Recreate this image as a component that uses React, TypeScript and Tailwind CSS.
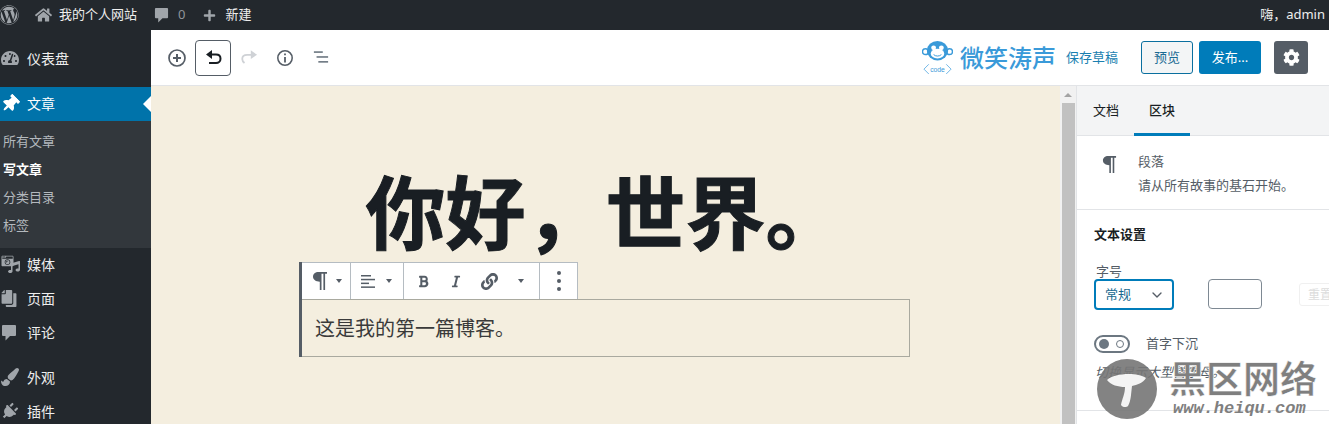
import { FaWordpress, FaHome, FaPlus, FaTachometerAlt, FaThumbtack, FaCopy, FaPaintBrush, FaPlug, FaCog, FaBold, FaItalic, FaLink, FaCameraRetro, FaMusic } from "react-icons/fa";
import { ChevronDown } from "lucide-react";

const font = "font-['Noto_Sans','Noto_Sans_CJK_SC',sans-serif]";

function Caret({ className = "" }: { className?: string }) {
  return <span className={`w-0 h-0 border-x-[3.5px] border-x-transparent border-t-[4px] border-t-[#555d66] ${className}`} />;
}

function Pilcrow({ className = "" }: { className?: string }) {
  return (
    <svg viewBox="0 0 16 20" className={className} fill="#555d66">
      <path d="M6.500 1H15v1.700h-1.900V19h-1.700V2.700H9.500V19H7.800v-8.300C4 10.700 1 8.800 1 5.800 1 3 3.300 1 6.500 1z" />
    </svg>
  );
}

function Bubble({ className = "" }: { className?: string }) {
  return (
    <svg viewBox="0 0 16 17" className={className} fill="currentColor">
      <path d="M2 1h12a1 1 0 0 1 1 1v9a1 1 0 0 1-1 1H9l-4.500 4.500V12H2a1 1 0 0 1-1-1V2a1 1 0 0 1 1-1z" />
    </svg>
  );
}

function MediaIcon() {
  return (
    <span className="relative w-[19px] h-[18px] text-[#a0a5aa]">
      <FaCameraRetro className="absolute left-0 top-0 w-[13px] h-[12px]" />
      <FaMusic className="absolute left-[7px] top-[6px] w-[12px] h-[12px]" />
    </span>
  );
}

function MenuItem({ icon, label }: { icon: React.ReactNode; label: string }) {
  return (
    <div className="flex items-center h-[34px] shrink-0 pl-[1px] pb-[2px] text-[#eeeeee] text-[14px]">
      <span className="w-[26px] flex items-center text-[#a0a5aa]">{icon}</span>
      {label}
    </div>
  );
}

function Sidebar() {
  return (
    <aside className="w-[151px] shrink-0 bg-[#23282d] flex flex-col overflow-hidden">
      <div className="pt-[12px] shrink-0">
        <MenuItem icon={<FaTachometerAlt className="w-[18px] h-[18px]" />} label="仪表盘" />
      </div>
      <div className="h-[11px] shrink-0" />
      <div className="relative h-[34px] shrink-0 bg-[#0073aa] flex items-center pl-[1px] pb-[1px] text-white text-[14px]">
        <span className="w-[26px] flex items-center"><FaThumbtack className="w-[18px] h-[18px] rotate-45" /></span>
        文章
        <span className="absolute right-0 top-[9px] w-0 h-0 border-y-[8px] border-y-transparent border-r-[8px] border-r-white" />
      </div>
      <div className="bg-[#32373c] h-[127px] shrink-0 pt-[6px] text-[13px] text-[#b4b9be] pl-[3px]">
        <div className="h-[28px] leading-[28px]">所有文章</div>
        <div className="h-[28px] leading-[28px] text-white font-bold">写文章</div>
        <div className="h-[28px] leading-[28px]">分类目录</div>
        <div className="h-[28px] leading-[28px]">标签</div>
      </div>
      <MenuItem icon={<MediaIcon />} label="媒体" />
      <MenuItem icon={<FaCopy className="w-[16px] h-[17px] -scale-x-100" />} label="页面" />
      <MenuItem icon={<Bubble className="w-[16px] h-[17px]" />} label="评论" />
      <div className="h-[11px] shrink-0" />
      <MenuItem icon={<FaPaintBrush className="w-[18px] h-[18px]" />} label="外观" />
      <MenuItem icon={<FaPlug className="w-[17px] h-[17px] rotate-45" />} label="插件" />
    </aside>
  );
}

function EditorToolbar() {
  return (
    <div className="h-[56px] shrink-0 bg-white border-b border-[#e2e4e7] flex items-center pl-[17px] pr-[21px]">
      <button className="w-[18px] h-[18px] flex items-center justify-center">
        <svg viewBox="0 0 20 20" className="w-[20px] h-[20px] shrink-0" fill="none" stroke="#555d66" strokeWidth="1.700">
          <circle cx="10" cy="10" r="8" />
          <path d="M10 6v8M6 10h8" strokeWidth="2" />
        </svg>
      </button>
      <button className="ml-[9px] w-[36px] h-[36px] rounded-[4px] border border-[#555d66] flex items-center justify-center">
        <svg viewBox="0 0 20 20" className="w-[20px] h-[20px]" fill="none" stroke="#191e23" strokeWidth="2">
          <path d="M5 6.500h8c2.700 0 4.500 1.800 4.500 4.200S15.700 15 13 15H6" />
          <path d="M9 2 3 6.500 9 11z" fill="#191e23" stroke="none" />
        </svg>
      </button>
      <span className="ml-[9px] w-[18px] flex justify-center">
        <svg viewBox="0 0 20 20" className="w-[20px] h-[20px]" fill="none" stroke="#cfd2d6" strokeWidth="2">
          <path d="M15 6.500H8C4.500 6.500 2.500 8.500 2.500 11c0 2 .8 3.200 2.500 4.500" />
          <path d="M12 1.500 19 6.500 12 11z" fill="#cfd2d6" stroke="none" />
        </svg>
      </span>
      <span className="ml-[18px] w-[18px] flex justify-center">
        <svg viewBox="0 0 20 20" className="w-[20px] h-[20px]" fill="none" stroke="#555d66" strokeWidth="1.700">
          <circle cx="10" cy="10" r="8" />
          <path d="M10 9v6" strokeWidth="2" />
          <path d="M10 5v2" strokeWidth="2" />
        </svg>
      </span>
      <span className="ml-[18px] w-[18px] flex justify-center">
        <svg viewBox="0 0 18 14" className="w-[16px] h-[13px]" fill="#6c7781">
          <rect x="1" y="0" width="10" height="1.800" />
          <rect x="4" y="5.500" width="13" height="1.800" />
          <rect x="6" y="11" width="11" height="1.800" />
        </svg>
      </span>

      <div className="ml-auto flex items-center">
        <svg viewBox="0 0 32 36" className="w-[31px] h-[35px]" fill="none">
          <circle cx="3.500" cy="12" r="3" stroke="#3a9ad9" strokeWidth="1.500" />
          <circle cx="28.500" cy="12" r="3" stroke="#3a9ad9" strokeWidth="1.500" />
          <ellipse cx="16" cy="11" rx="11" ry="10" fill="#3a9ad9" />
          <ellipse cx="16" cy="14" rx="7" ry="5" fill="#ffffff" />
          <circle cx="12" cy="8" r="2.500" fill="#ffffff" />
          <circle cx="20" cy="8" r="2.500" fill="#ffffff" />
          <path d="M12 15c2 2 6 2 8 0" stroke="#3a9ad9" strokeWidth="1" />
          <path d="M7 25 2 30l5 5M25 25l5 5-5 5" stroke="#6db6e6" strokeWidth="1" />
          <text x="16" y="33" fontSize="7" textAnchor="middle" fill="#3a9ad9" fontFamily="Liberation Sans">code</text>
        </svg>
        <span className="ml-[7px] w-[96px] text-[24px] leading-none font-medium text-[#3a9ad9] whitespace-nowrap">微笑涛声</span>
        <span className="ml-[10px] text-[13px] text-[#1a7fb0]">保存草稿</span>
        <button className="ml-[23px] w-[52px] h-[33px] rounded-[3px] border border-[#0a6f9f] bg-[#f3f5f6] text-[13px] text-[#1a6a93]">预览</button>
        <button className="ml-[6px] w-[62px] h-[33px] rounded-[3px] bg-[#007cba] text-[13px] text-white">发布...</button>
        <button className="ml-[13px] w-[34px] h-[33px] rounded-[3px] bg-[#555d66] flex items-center justify-center">
          <FaCog className="w-[17px] h-[17px] text-white" />
        </button>
      </div>
    </div>
  );
}

function BlockToolbar() {
  const cell = "h-full flex items-center border-r border-[#b5bcc2]";
  return (
    <div className="w-[276px] h-[38px] -mb-[1px] bg-white border border-[#b5bcc2] border-l-0 flex items-center shrink-0">
      <div className={`${cell} w-[49px] pl-[10px]`}>
        <Pilcrow className="w-[16px] h-[20px]" />
        <Caret className="ml-[8px]" />
      </div>
      <div className={`${cell} w-[53px] pl-[10px]`}>
        <svg viewBox="0 0 15 13" className="w-[15px] h-[13px]" fill="#555d66">
          <rect x="0" y="0" width="10" height="1.500" />
          <rect x="0" y="3.800" width="14" height="1.500" />
          <rect x="0" y="7.600" width="8" height="1.500" />
          <rect x="0" y="11.400" width="14" height="1.500" />
        </svg>
        <Caret className="ml-[10px]" />
      </div>
      <div className={`${cell} w-[136px] pl-[14px] text-[#555d66]`}>
        <FaBold className="w-[11px] h-[13px]" />
        <FaItalic className="ml-[22px] w-[10px] h-[13px]" />
        <FaLink className="ml-[20px] w-[17px] h-[17px]" />
        <Caret className="ml-[20px]" />
      </div>
      <div className="flex-1 flex flex-col items-center gap-[4px]">
        <span className="w-[4px] h-[4px] rounded-full bg-[#555d66]" />
        <span className="w-[4px] h-[4px] rounded-full bg-[#555d66]" />
        <span className="w-[4px] h-[4px] rounded-full bg-[#555d66]" />
      </div>
    </div>
  );
}

function Canvas() {
  return (
    <div className="flex-1 min-w-0 bg-[#f4eedf] overflow-hidden">
      <h1 className="mt-[75px] h-[101px] text-center text-[80px] leading-[101px] font-bold text-[#191e23] whitespace-nowrap [-webkit-text-stroke:1px_#191e23]">你好，世界。</h1>
      <div className="ml-[148px] w-[611px] border-l-[3px] border-[#555d66] flex flex-col">
        <BlockToolbar />
        <div className="h-[58px] border border-l-0 border-[#a9a99f] flex items-center pl-[13px] pt-[1px] text-[20px] text-[#3a3a3a]">这是我的第一篇博客。</div>
      </div>
    </div>
  );
}

function Scrollbar() {
  return (
    <div className="w-[16px] shrink-0 bg-[#f1f1f1] flex flex-col items-center">
      <span className="mt-[7px] w-0 h-0 border-x-[4px] border-x-transparent border-b-[4px] border-b-[#a3a3a3]" />
      <div className="mt-[6px] w-[13px] flex-1 bg-[#c1c1c1]" />
    </div>
  );
}

function SettingsPanel() {
  return (
    <div className="w-[253px] shrink-0 bg-white border-l border-[#e2e4e7] flex flex-col text-[#555d66] overflow-hidden">
      <div className="h-[50px] bg-[#f3f4f5] border-b border-[#e2e4e7] flex text-[13px] text-[#191e23] pl-[1px]">
        <div className="w-[56px] flex items-center justify-center">文档</div>
        <div className="w-[56px] flex items-center justify-center border-b-[3px] border-[#007cba] h-[50px] pt-[3px] font-medium">区块</div>
      </div>
      <div className="h-[74px] border-b border-[#e2e4e7] flex pl-[25px] pt-[19px]">
        <Pilcrow className="w-[15px] h-[19px]" />
        <div className="ml-[21px] -mt-[6px] text-[13px] leading-[24px]">
          <div>段落</div>
          <div className="whitespace-nowrap">请从所有故事的基石开始。</div>
        </div>
      </div>
      <div className="h-[201px] border-b border-[#e2e4e7] pl-[17px] pt-[14px]">
        <div className="text-[13px] leading-[20px] font-bold text-[#191e23]">文本设置</div>
        <div className="ml-[2px] mt-[18px] text-[13px] leading-[18px]">字号</div>
        <div className="flex items-start -mt-[1px]">
          <div className="w-[80px] h-[31px] shrink-0 rounded-[4px] border-2 border-[#007cba] flex items-center justify-between pl-[9px] pr-[7px] text-[13px] text-[#16698f]">
            常规
            <ChevronDown className="w-[16px] h-[16px] text-[#555d66]" strokeWidth={2} />
          </div>
          <div className="ml-[34px] w-[54px] h-[30px] shrink-0 rounded-[4px] border border-[#7e8993]" />
          <div className="ml-[37px] mt-[4px] w-[60px] h-[23px] shrink-0 rounded-[3px] border border-[#f0f0f0] flex items-center pl-[8px] text-[12px] text-[#dcdcdc] whitespace-nowrap">重置</div>
        </div>
        <div className="flex items-center mt-[24px]">
          <div className="relative w-[36px] h-[18px] rounded-full border-2 border-[#6c7781]">
            <span className="absolute left-[3px] top-[2px] w-[10px] h-[10px] rounded-full bg-[#6c7781]" />
            <span className="absolute right-[4px] top-[3px] w-[8px] h-[8px] rounded-full border border-[#6c7781]" />
          </div>
          <span className="ml-[16px] text-[13px]">首字下沉</span>
        </div>
        <div className="ml-[1px] mt-[9px] text-[13px] italic text-[#555d66] whitespace-nowrap">切换显示大型首字母。</div>
      </div>
    </div>
  );
}

function Watermark() {
  return (
    <div className="absolute left-[1097px] top-[359px] w-[232px] h-[65px] pointer-events-none">
      <div className="absolute left-0 top-0 w-[60px] h-[60px] rounded-full bg-[#757575]/90 overflow-hidden">
        <svg viewBox="0 0 60 60" className="w-[60px] h-[60px]" fill="#f4f4f4">
          <path d="M10 21c8-7 30-8 39-2-3 5-9 7-14 8-1 8-1 15-4 20-2 2-6 1-7-1 1-6 4-11 4-18-7 0-14-2-18-7z" />
        </svg>
      </div>
      <div className="absolute left-[72px] -top-[2px] text-[37px] leading-[43px] font-bold text-[#7f7f7f] whitespace-nowrap [-webkit-text-stroke:0.5px_#ffffff]">黑区网络</div>
      <div className="absolute left-[76px] top-[40px] text-[17px] leading-[20px] font-bold italic text-[#7f7f7f] whitespace-nowrap font-['Liberation_Mono',monospace]">www.heiqu.com</div>
    </div>
  );
}

export default function App() {
  return (
    <div className={`relative w-[1329px] h-[424px] overflow-hidden flex flex-col ${font}`}>
      <header className="h-[30px] shrink-0 bg-[#23282d] flex items-center text-[13px] text-[#eeeeee]">
        <FaWordpress className="ml-[-1px] w-[20px] h-[20px] text-[#a0a5aa]" />
        <FaHome className="ml-[16px] w-[17px] h-[16px] text-[#a0a5aa]" />
        <span className="ml-[7px]">我的个人网站</span>
        <Bubble className="ml-[17px] w-[15px] h-[16px] text-[#a0a5aa]" />
        <span className="ml-[9px] text-[#8f949a]">0</span>
        <FaPlus className="ml-[18px] w-[13px] h-[13px] text-[#a0a5aa]" />
        <span className="ml-[9px]">新建</span>
        <span className="ml-auto mr-[4px]">嗨，admin</span>
      </header>
      <div className="flex-1 flex min-h-0">
        <Sidebar />
        <main className="flex-1 flex flex-col min-w-0">
          <EditorToolbar />
          <div className="flex-1 flex min-h-0">
            <Canvas />
            <Scrollbar />
            <SettingsPanel />
          </div>
        </main>
      </div>
      <Watermark />
    </div>
  );
}
